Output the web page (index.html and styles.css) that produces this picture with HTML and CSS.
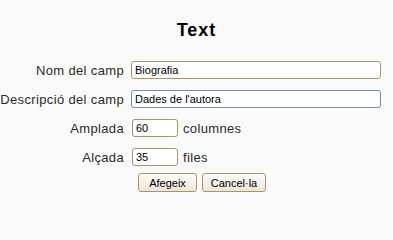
FILE: index.html
```html
<!DOCTYPE html>
<html>
<head>
<meta charset="utf-8">
<link rel="stylesheet" href="styles.css">
</head>
<body>
<div class="page">
  <h1 class="title">Text</h1>
  <form class="form">
    <label class="lbl">Nom del camp</label>
    <div class="field"><input class="inp wide" type="text" value="Biografia"></div>
    <label class="lbl">Descripció del camp</label>
    <div class="field"><input class="inp wide focus" type="text" value="Dades de l'autora"></div>
    <label class="lbl">Amplada</label>
    <div class="field"><input class="inp small" type="text" value="60"><span class="unit">columnes</span></div>
    <label class="lbl">Alçada</label>
    <div class="field"><input class="inp small" type="text" value="35"><span class="unit">files</span></div>
    <div class="buttons">
      <button type="button" class="btn">Afegeix</button>
      <button type="button" class="btn">Cancel·la</button>
    </div>
  </form>
</div>
</body>
</html>
```
FILE: styles.css
```css
html, body {
  margin: 0;
  padding: 0;
  background: #fafafa;
}
.page {
  font-family: "Liberation Sans", Arial, sans-serif;
  color: #222;
}
.title {
  margin: 0 0 20px;
  padding-top: 20px;
  height: 41px;
  box-sizing: border-box;
  text-align: center;
  font-size: 18px;
  font-weight: bold;
  letter-spacing: 1px;
  color: #000;
  line-height: 21px;
}
.form {
  display: grid;
  grid-template-columns: 124px 1fr;
  column-gap: 7px;
  row-gap: 11px;
  align-items: center;
}
.lbl {
  text-align: right;
  font-size: 13px;
  letter-spacing: 0.35px;
  white-space: nowrap;
  color: #2a2a2a;
}
.field {
  display: flex;
  align-items: center;
  height: 18px;
}
.inp {
  box-sizing: border-box;
  height: 18px;
  margin: 0;
  padding: 0 3px;
  font-family: "Liberation Sans", Arial, sans-serif;
  font-size: 11px;
  color: #000;
  background: #fff;
  border: 1px solid #a8956a;
  border-radius: 3px;
  outline: none;
}
.wide { width: 250px; }
.focus { border-color: #6e8fb5; }
.small { width: 46px; margin-left: 1px; }
.unit {
  margin-left: 5px;
  font-size: 13px;
  letter-spacing: 0.35px;
  color: #2a2a2a;
}
.buttons {
  grid-column: 2;
  display: flex;
  gap: 5px;
  margin-top: -4px;
  padding-left: 7px;
}
.btn {
  box-sizing: border-box;
  height: 19px;
  padding: 0 6px;
  font-family: "Liberation Sans", Arial, sans-serif;
  font-size: 11px;
  color: #000;
  background: linear-gradient(#fdfcf9, #ece6d8);
  border: 1px solid #a8956a;
  border-radius: 3px;
}
.btn:first-child { width: 59px; }
.btn:last-child { width: 64px; }
```
